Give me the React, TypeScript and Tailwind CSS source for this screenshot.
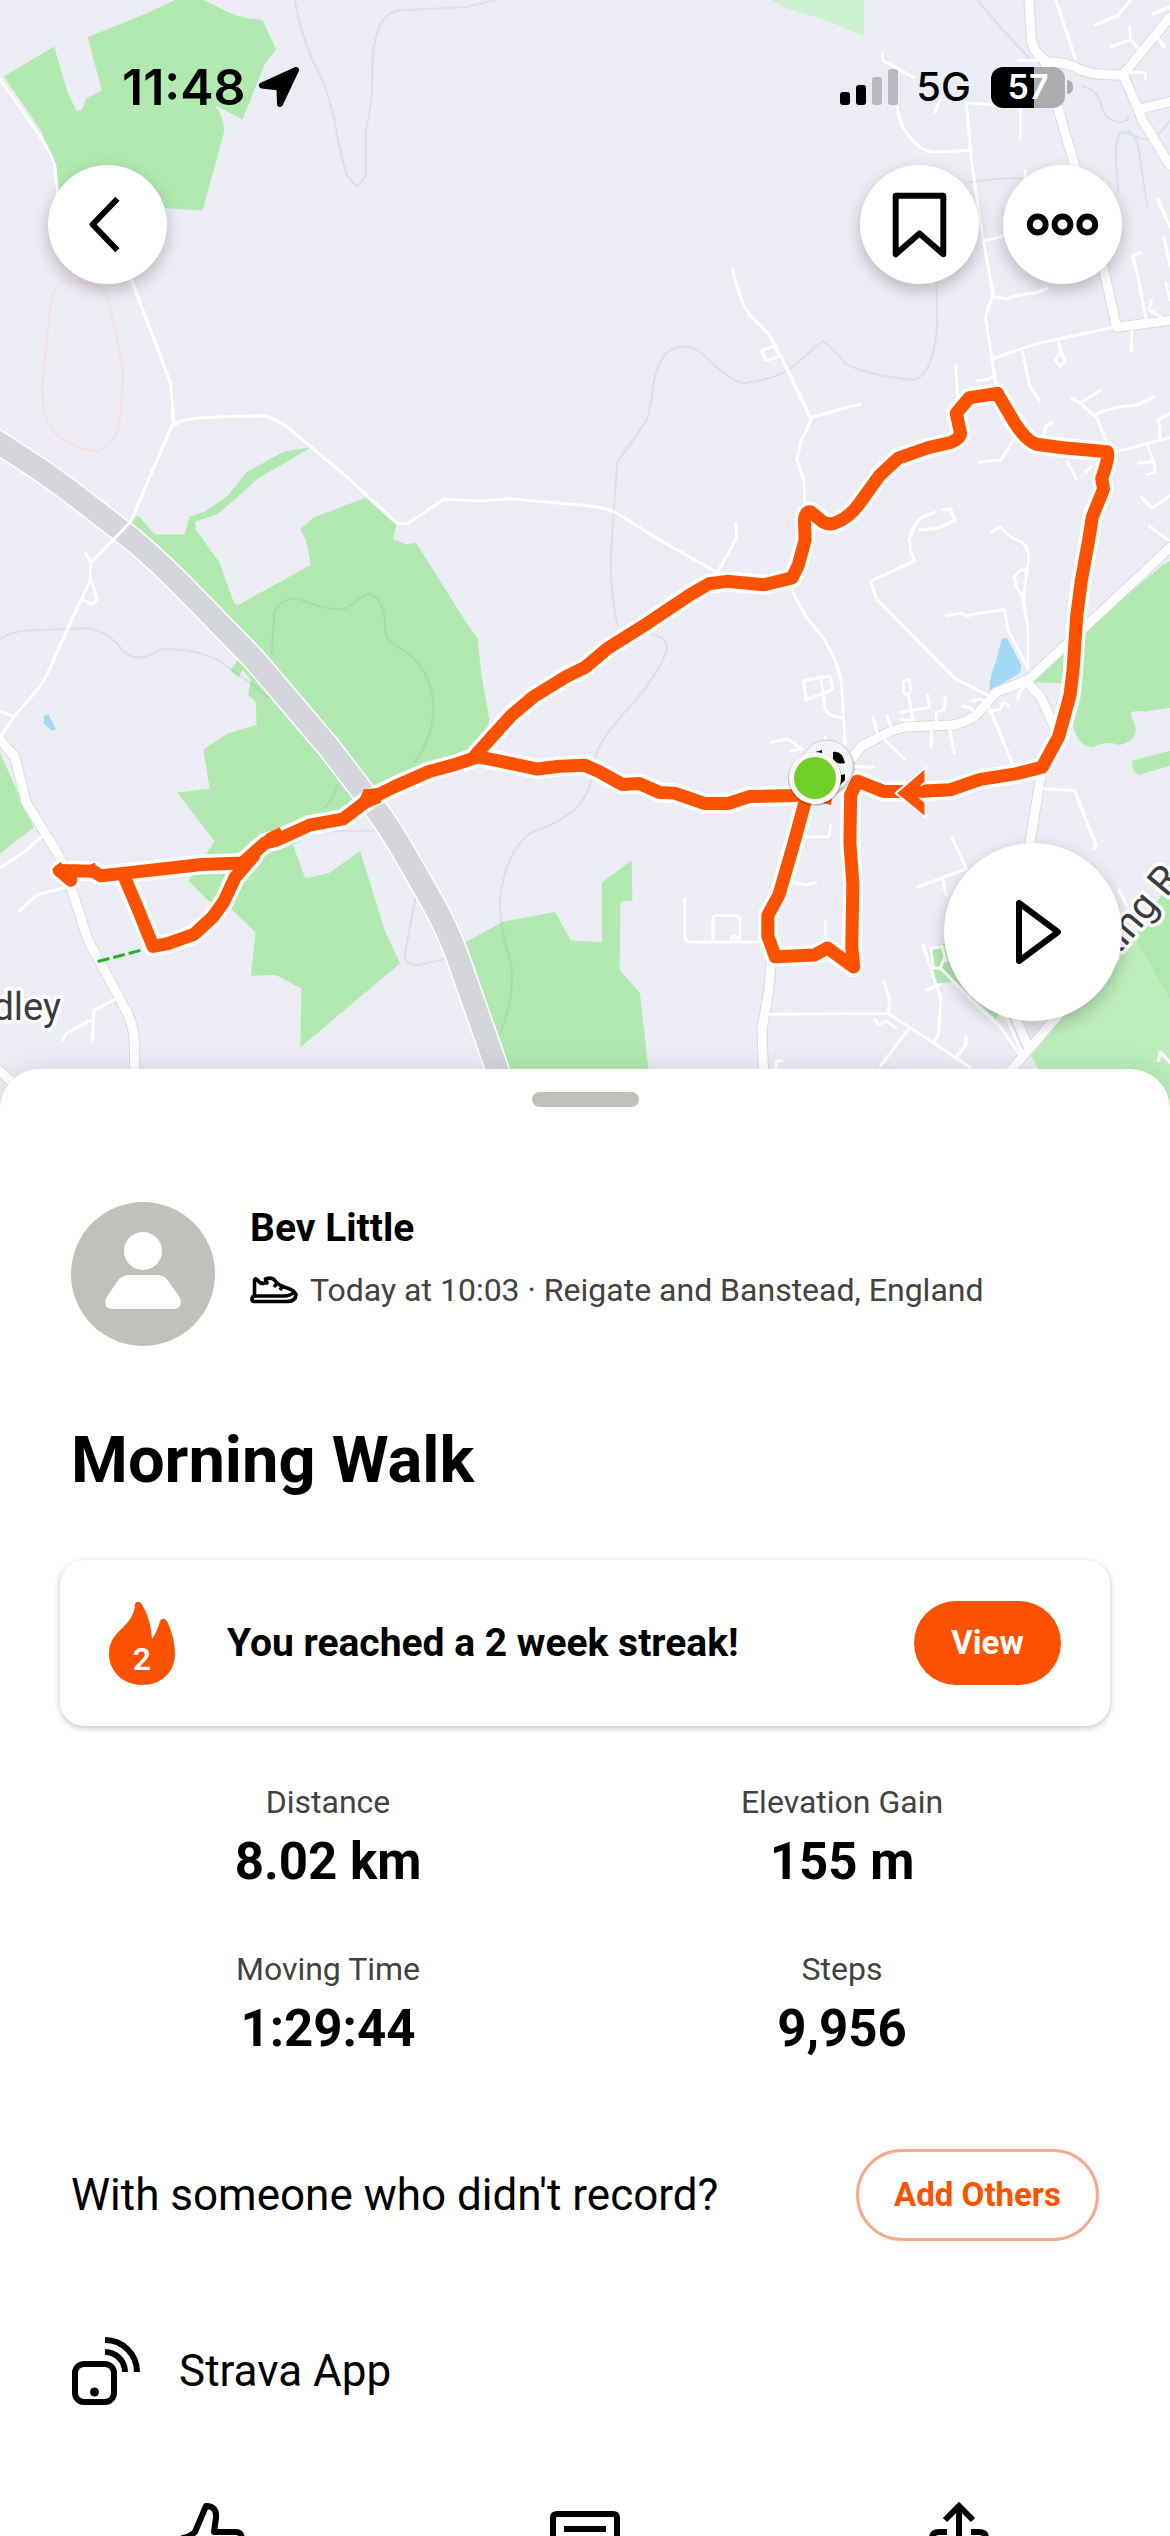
import React from "react";

const MINOR_ROADS = [
  // west side
  "M0 230L110 400Q145 460 148 490L155 570L290 700L355 820L458 1115L465 1225L350 1515L245 1633L240 1690L210 1758L150 1900Q120 1980 100 2003L40 2078L0 2140",
  "M230 1608L245 1633M243 1680L260 1740L248 1754L222 1742M0 2065L36 2080",
  "M458 1213L467 1228L490 1222M467 1235L490 1220L545 1212L705 1207Q740 1215 770 1240L930 1385L1060 1515Q1075 1526 1095 1518L1190 1450L1290 1455L1370 1448L1568 1468Q1640 1475 1668 1500L1768 1568L1923 1663",
  "M110 2430L70 2470L0 2520M180 2575L100 2598L52 2645M310 2900L252 2935L248 3020M248 2960L178 3000L170 3020",
  // lanes north of the village
  "M1963 780Q1985 880 2010 915L2062 972L2093 1035L2172 1213Q2175 1230 2148 1275L2136 1335L2155 1395L2157 1480",
  "M2172 1213L2305 1173M2093 1035L2052 1046L2042 1018L2075 1005L2088 1032",
  "M2365 155V175L2450 225M2405 310Q2410 380 2470 430Q2490 443 2510 441L2600 437M2590 300L2605 480L2636 700L2662 855Q2650 890 2641 920L2670 1120M2590 298L2700 308M2735 315V400M2520 290L2505 325",
  "M2660 860L2700 868L2725 858L2775 850L2806 838M2636 700L2690 685M2662 1042Q2740 1010 2790 995L2985 950M2740 1020L2760 1120L2786 1162M2836 990L2844 1020L2854 1050L2842 1065L2828 1045L2844 1020M2618 1106L2648 1102L2664 1090M2562 1060L2566 1150",
  "M2830 0L2882 170M3030 0L2996 45L2935 72M3090 40L3136 20M2980 135L3030 115L3050 140M3030 115L3028 80M3020 210L3070 212V230M2730 175H2780M2748 495V520M3095 100L3120 135",
  "M3056 735L3036 742L3050 805L3072 925M3104 580L3136 660M3120 690L3136 770M3086 870L3080 900L3110 920M3125 820L3136 870M3034 960L3032 1020",
  "M2872 1155L2895 1170L2950 1133M2895 1170L2940 1215L2965 1280L2968 1300M2935 1205Q2960 1190 3000 1182L3050 1175L3093 1153M2990 1312L3136 1270M3075 1290L3095 1350V1370L3075 1378M3110 1270L3105 1220L3136 1200M3052 1345L3090 1340",
  "M2626 1342L2683 1336L2700 1305L2720 1270M2795 1270L2805 1235L2820 1225M2860 1340L2885 1390M2910 1370L2925 1355",
  "M3060 1445L3088 1475L3136 1440M3080 1527L3130 1568M2658 1545L2680 1530L2710 1560L2740 1575Q2757 1590 2757 1620L2742 1740L2755 1820V1940",
  "M2436 1568L2450 1530L2465 1505L2505 1488M2525 1480L2548 1478L2560 1512L2510 1535L2465 1538M1923 1663L1975 1560L1972 1520",
  "M2438 1568L2440 1600L2452 1628L2333 1688L2350 1740L2560 1970L2650 2020M2752 1655L2735 1655L2718 1675L2725 1705L2738 1728",
  "M2538 1788L2575 1780L2590 1788L2640 1778L2692 1770L2702 1830L2755 1940",
  "M2120 1710L2160 1790L2210 1858Q2250 1930 2256 1990L2265 2160",
  "M2154 1976L2225 1962L2232 2002L2160 2032ZM2200 1968L2212 2060Q2220 2080 2260 2085M2068 2155L2110 2145L2150 2175L2118 2180M2212 2140L2216 2160",
  "M2422 1980L2436 1973L2442 2005L2432 2020L2422 2010ZM2436 2020L2446 2090M2416 2068L2492 2054L2486 2018M2416 2090H2450M2534 2025L2530 2060L2510 2070V2110M2340 2084L2352 2130M2378 2078L2386 2110M2496 2120V2170M2545 2115L2558 2188M2372 2150L2426 2205",
  "M2650 2050L2714 2218M2608 2035L2630 2030L2650 2050M2580 2050L2602 2055L2612 2068M2650 2065L2680 2060L2690 2040L2706 2050M2728 2030L2732 2010L2748 1990",
  "M2290 2226L2342 2228M2798 2290L2880 2295L2938 2455L2932 2465M2460 2575L2590 2523L2552 2432M2526 2550L2536 2600M2130 2563L2165 2570L2186 2562M2158 2430H2222L2226 2398",
  "M1835 2610V2720Q1838 2734 1850 2735H2035M1911 2732V2665Q1915 2655 1925 2658H1970Q1985 2660 1984 2675L1983 2732M1960 2725A8 8 0 1 1 1972 2732M2212 2675V2730",
  "M2062 2945L2380 2942L2440 2985L2510 3034L2600 3100M2370 2850L2385 2905L2380 2942M2434 2990L2360 3095M2345 2960L2355 2976L2375 2965L2402 2985M2080 3100V3082L2095 3080M2590 3010L2588 3035L2566 3065",
  "M2474 2745L2522 2900L2515 3005L2505 3022M2482 2875L2520 2860M2494 2755L2525 2748L2535 2790M2494 2755L2502 2810L2520 2812M2530 2785L2520 2810L2600 2900L2680 2980L2735 3065M2630 2900L2700 2960L2740 3060M3000 2585L3025 2640",
  "M3105 3080L3110 3055L3136 3085",
];

const MAJOR_ROADS = [
  "M0 2148L40 2198L70 2330L160 2488L200 2608L235 2728L340 2938Q358 2980 360 3020L362 3200M0 3110L40 3150",
  "M2758 0L2764 110Q2770 160 2810 180Q2860 180 2900 205Q2940 220 3010 217L3136 50M3010 217L3050 315L3060 345L3136 480M3050 318L3136 295",
  "M2800 180L2875 460L2960 790L2993 950L3136 930",
  "M3136 1590L2755 1975L2670 2010L2615 2078Q2570 2108 2540 2106L2430 2110Q2390 2118 2340 2150L2310 2165L2285 2200",
  "M2748 1975L2790 2025L2830 2120M2792 2240L2775 2350L2760 2450",
  "M2068 2790L2060 2880L2042 2990L2050 3200M2700 3120L2850 2930M2720 2950L2752 3030",
];

const CONTOURS = [
  "M790 0Q810 120 850 200Q890 290 905 400Q920 480 930 510L957 543L980 510V380Q1000 300 998 200Q1000 30 1080 30L1250 20L1330 0",
  "M1640 1568Q1650 1400 1655 1340Q1730 1230 1735 1215C1755 1150 1740 1080 1790 1020Q1840 990 1880 1025Q1960 1110 1995 1112Q2090 1100 2130 1060L2205 990Q2240 1020 2265 1055Q2320 1090 2450 1103Q2500 1090 2512 950L2510 800",
  "M1640 1568Q1630 1700 1655 1815M1745 1842Q1790 1850 1788 1885Q1770 1950 1690 2050Q1610 2140 1595 2200Q1590 2300 1540 2350Q1500 2390 1420 2420Q1350 2480 1340 2620Q1340 2700 1370 2800Q1380 2900 1340 3000",
  "M0 1855Q40 1828 90 1830L230 1824Q290 1830 330 1890Q370 1930 430 1885Q520 1880 590 1920L680 1990Q730 2040 730 2020",
  "M728 1900L735 1780Q750 1735 800 1738Q890 1780 930 1765L985 1723Q1035 1735 1032 1830Q1035 1860 1060 1875Q1160 1930 1162 2060Q1160 2140 1110 2215M870 2345Q900 2310 902 2280M830 2415L1000 2412M1115 2600L1085 2770Q1080 2800 1120 2803L1190 2785",
  "M2620 0Q2680 80 2760 170M2590 530Q2680 515 2740 518M2900 250Q2940 260 2950 300Q2960 350 3000 355Q3020 355 3025 340M2998 560Q2980 380 3010 385Q3040 385 3050 420L3075 600M3025 380Q3080 440 3136 350",
];

const GREENS = [
  "M10 222L145 135L180 265L205 322L220 318L232 285L273 262L235 108L395 38L470 0H545L620 40L660 53L703 57L740 143L710 185L650 347L575 305Q603 345 600 385L543 612L445 605L150 560L148 480L110 380Z",
  "M835 1298L760 1312L660 1372L610 1440L550 1485L508 1500L495 1552H415L370 1497L350 1515L460 1670L640 1913L618 1946L640 1968L650 1945L672 1973L665 2018L685 2038L688 2105L610 2130L545 2176L562 2290L475 2301L575 2443L505 2558L560 2618L620 2640L685 2708L672 2833L740 2831L808 2871L805 3041L1072 2798L1030 2698L965 2471L882 2535L818 2550L785 2453L1000 2335L1290 2180L1312 2090L1290 1958L1280 1853L1250 1808L1115 1576L1090 1580L1052 1565L1062 1525L980 1445L840 1503L805 1537L820 1568L833 1640L640 1756L628 1753L588 1633L545 1568L525 1540L523 1515L585 1492L640 1440L690 1390L770 1340Z",
  "M0 2185L90 2403L0 2478Z",
  "M1240 2740L1350 2676L1488 2648L1530 2731L1613 2736V2563L1693 2498L1695 2615L1663 2618L1661 2816L1715 2883L1738 3103V3200H1390Z",
  "M3136 1630L3118 1640L2908 1828L2898 2018L2876 2108Q2895 2175 2930 2168Q2970 2150 3000 2163Q3050 2150 3043 2110L3030 2070Q3040 2062 3070 2066L3136 2055Z",
  "M3036 2208L3136 2180V2223L3053 2250Q3030 2240 3036 2208Z",
  "M2768 1980L2851 1893L2848 1984Z",
  "M2488 2758L2540 2735L2560 2830L2680 2930L2670 2960L2560 2850L2510 2855Z",
];

const ROUTE = [
  "M2185 2303L2128 2310L2008 2313L1953 2333H1888L1808 2303L1768 2301L1713 2275L1668 2278L1610 2243L1568 2222L1500 2225L1440 2233L1330 2208L1280 2198L1210 2223L1150 2240L1060 2283L990 2320L920 2378L830 2396L740 2440L710 2448L650 2506L540 2510L330 2536L270 2543L250 2530L160 2528L190 2556",
  "M330 2538L370 2640L410 2748L450 2740L520 2713L570 2663L600 2618L630 2548L680 2485",
  "M1275 2192L1370 2078L1430 2023L1520 1963L1568 1938L1628 1883L1738 1808L1848 1728L1900 1695L1948 1688L2048 1698L2123 1678L2140 1640L2158 1568L2156 1510Q2160 1480 2175 1488L2205 1515Q2225 1527 2245 1515Q2280 1500 2308 1455L2358 1380L2408 1330L2488 1300L2548 1285Q2580 1270 2573 1250L2563 1200L2598 1155L2673 1142L2718 1225Q2750 1280 2778 1290L2848 1300L2968 1312Q2975 1320 2953 1390L2958 1420L2928 1500L2918 1568L2898 1688L2886 1788L2876 1948L2868 2018L2838 2138L2793 2228L2718 2248L2628 2263L2548 2293L2448 2298H2368L2298 2268L2280 2308L2278 2448L2286 2568L2283 2748L2288 2808L2218 2753L2183 2773L2078 2778L2058 2718V2658L2088 2598L2128 2448L2158 2328",
];

const ARROW_TAIL = ["M2440 2300L2480 2298L2548 2293"];

const MOTORWAY = [
  "M-20 1274L105 1362L180 1420L357 1568Q440 1645 518 1733L680 1913L786 2048L880 2168L986 2318Q1040 2395 1079 2468L1163 2628Q1195 2690 1223 2768L1332 3103L1362 3200",
];

function Strokes({ paths, color, width }: { paths: string[]; color: string; width: number }) {
  return (
    <g fill="none" stroke={color} strokeWidth={width} strokeLinecap="round" strokeLinejoin="round">
      {paths.map((d) => (
        <path key={d} d={d} vectorEffect="non-scaling-stroke" />
      ))}
    </g>
  );
}

function RouteMap() {
  return (
    <svg
      viewBox="0 0 1170 1110"
      preserveAspectRatio="xMidYMin slice"
      className="col-start-1 row-start-1 h-[1110px] w-full bg-[#ebecf4]"
      role="img"
      aria-label="Map of the walk route"
    >
      {/* Survey grid units: 3136 across and 3136 down for 1170 by 1080 */}
      <g transform="scale(0.37309 0.34439)">
        <path d="M2068 0L2098 20L2218 60L2315 105V0Z" fill="#cdf0cf" />
        {GREENS.map((d) => (
          <path key={d} d={d} fill="#b1e9b0" />
        ))}
        <path d="M2763 3063L2860 2940L3010 2770L3136 2578V3230H2840Z" fill="#bdedbb" />
        <path d="M3040 2720L3136 2900V2560Z" fill="#b1e9b0" />
        <path d="M2685 1853H2700L2738 1933L2733 1955L2653 2006Q2650 1970 2670 1920Z" fill="#a3d9f2" />
        <path d="M118 2078L130 2075L150 2118L138 2122L118 2100Z" fill="#a3d9f2" />
        <path
          d="M180 818C140 820 135 870 132 920L113 1120Q112 1220 150 1260Q210 1310 265 1308Q320 1290 325 1180L330 1080Q300 900 285 860Q270 820 220 822Z"
          fill="none"
          stroke="#f7dfdf"
          strokeWidth="2"
          vectorEffect="non-scaling-stroke"
        />
        <g opacity="0.09">
          <Strokes paths={CONTOURS} color="#5b6478" width={2} />
        </g>
        <Strokes paths={MOTORWAY} color="#ffffff" width={25} />
        <Strokes paths={MOTORWAY} color="#d5d6dc" width={22} />
        <Strokes paths={MAJOR_ROADS} color="#dadbe2" width={11} />
        <Strokes paths={MINOR_ROADS} color="#ffffff" width={3} />
        <Strokes paths={MAJOR_ROADS} color="#ffffff" width={9} />
        <path
          d="M262 2792L382 2758"
          stroke="#1fb51f"
          strokeWidth="3"
          strokeDasharray="12 4"
          vectorEffect="non-scaling-stroke"
        />
        <Strokes paths={ROUTE} color="#ffffff" width={20} />
        <Strokes paths={ROUTE} color="#fc5200" width={13} />
        <path
          d="M960 2330L975 2292L1015 2288L1022 2330L990 2345L965 2348ZM140 2524L162 2503L180 2525L205 2560L187 2572L145 2540ZM700 2440L715 2420L750 2402L765 2435L725 2462ZM230 2515L255 2505L262 2545L240 2545Z"
          fill="#fc5200"
        />
        <path
          d="M2405 2303L2478 2235V2270L2444 2300L2478 2332V2368Z"
          fill="#fc5200"
          stroke="#ffffff"
          strokeWidth="4"
          paintOrder="stroke"
          vectorEffect="non-scaling-stroke"
        />
        <Strokes paths={ARROW_TAIL} color="#fc5200" width={12} />
      </g>
      <g>
        <circle cx="828" cy="768" r="27" fill="#000000" opacity="0.15" />
        <circle cx="827" cy="766" r="26" fill="#f3f3f3" stroke="#cfcfcf" />
        <path d="M833 752Q842 750 845 763Q837 765 833 759ZM838 776L845 774V780L839 786ZM812 753L822 750V754Z" fill="#000000" />
        <path d="M822 803L832 799L831 805Z" fill="#fc5200" />
        <circle cx="815" cy="779" r="27" fill="#000000" opacity="0.2" />
        <circle cx="815" cy="778" r="26" fill="#fafafa" />
        <circle cx="815" cy="778" r="21" fill="#70d026" />
      </g>
      <g
        fontFamily="Roboto, sans-serif"
        fill="#3c3c40"
        stroke="#ffffff"
        strokeWidth="7"
        strokeLinejoin="round"
        paintOrder="stroke"
      >
        <text x="61" y="1020" fontSize="38" textAnchor="end">
          dley
        </text>
        <text transform="translate(1112 963) rotate(-50)" fontSize="40">
          king R
        </text>
      </g>
    </svg>
  );
}

function StatusBar() {
  return (
    <div className="flex h-11 items-center justify-between pr-[97px] pl-[122px] font-['Inter',sans-serif] text-black">
      <div className="flex items-center gap-3">
        <span className="text-[50px] leading-none font-semibold">11:48</span>
        <svg viewBox="0 0 42 42" className="size-[42px]" aria-hidden="true">
          <path
            d="M38 4L4 19.500L21.500 21.500L22 38Z"
            fill="#000"
            stroke="#000"
            strokeWidth="6"
            strokeLinejoin="round"
          />
        </svg>
      </div>
      <div className="flex items-center">
        <div className="flex items-end gap-1.5" aria-label="Signal strength">
          <span className="h-[13px] w-2.5 rounded-[3px] bg-black" />
          <span className="h-5 w-2.5 rounded-[3px] bg-black" />
          <span className="h-7 w-2.5 rounded-[3px] bg-[#b7b8be]" />
          <span className="h-9 w-2.5 rounded-[3px] bg-[#b7b8be]" />
        </div>
        <span className="ml-[18px] text-[40px] leading-none font-medium">5G</span>
        <div className="ml-5 flex items-center gap-0.5">
          <span className="flex h-[41px] w-[74px] items-center justify-center rounded-xl bg-[linear-gradient(to_right,#000_58%,#adadb0_58%)] text-[34px] leading-none font-semibold text-white">
            57
          </span>
          <span className="h-3.5 w-1.5 rounded-r-full bg-[#adadb0]" />
        </div>
      </div>
    </div>
  );
}

const ROUND_BUTTON =
  "flex items-center justify-center rounded-full bg-white shadow-[0_6px_16px_rgba(0,0,0,0.22)]";

function MapControls() {
  return (
    <div className="z-10 col-start-1 row-start-1 flex flex-col pt-[65px] pb-[89px]">
      <StatusBar />
      <div className="mt-14 flex justify-between px-12">
        <button type="button" aria-label="Back" className={`${ROUND_BUTTON} size-[119px]`}>
          <svg viewBox="0 0 120 120" className="size-full" fill="none" stroke="#000" strokeWidth="6" strokeLinejoin="round">
            <path d="M70 34L45 60L70 86" />
          </svg>
        </button>
        <div className="flex gap-6">
          <button type="button" aria-label="Save" className={`${ROUND_BUTTON} size-[119px]`}>
            <svg viewBox="0 0 120 120" className="size-full" fill="none" stroke="#000" strokeWidth="6" strokeLinejoin="round">
              <path d="M36 31H84V90L60 69L36 90Z" />
            </svg>
          </button>
          <button type="button" aria-label="More" className={`${ROUND_BUTTON} size-[119px]`}>
            <svg viewBox="0 0 120 120" className="size-full" fill="none" stroke="#000" strokeWidth="6">
              <circle cx="35" cy="60" r="8" />
              <circle cx="60" cy="60" r="8" />
              <circle cx="85" cy="60" r="8" />
            </svg>
          </button>
        </div>
      </div>
      <button type="button" aria-label="Play flyover" className={`${ROUND_BUTTON} mt-auto mr-12 size-[178px] self-end`}>
        <svg viewBox="0 0 178 178" className="size-full" fill="none" stroke="#000" strokeWidth="6" strokeLinejoin="round">
          <path d="M75 60V118L114 89Z" />
        </svg>
      </button>
    </div>
  );
}

function ShoeIcon() {
  return (
    <svg viewBox="0 0 48 28" className="h-7 w-12" fill="none" stroke="#000" strokeWidth="3.600" strokeLinejoin="round" aria-hidden="true">
      <path d="M4.500 19V4.500Q5 1.500 7.500 4Q10.500 8.500 14.500 7L17 7L15.500 3Q21 1 24 3.500Q28 9 34 11Q45 14 46 18.500Q45.500 25.500 37 25.500H4Q2 25.500 2 23Q2 20.500 4.500 20H33Q41 20 44 16" />
      <path d="M28 6L24 11M33.500 9L30 14" />
    </svg>
  );
}

function FlameBadge({ count }: { count: number }) {
  return (
    <span className="grid shrink-0 place-items-center">
      <svg viewBox="0 0 66 84" className="col-start-1 row-start-1 h-[84px] w-[66px]" aria-hidden="true">
        <path
          d="M26 3Q28 -1 32 2C39 13 42 24 43 38Q49 29 51 20Q54 15 58 20Q66 37 66 53C66 71 52 84 33 84C14 84 0 70 0 53C0 28 25 27 26 3Z"
          fill="#fc5200"
        />
      </svg>
      <span className="col-start-1 row-start-1 pt-8 text-[32px] leading-none font-semibold text-white">{count}</span>
    </span>
  );
}

const STATS = [
  { label: "Distance", value: "8.02 km" },
  { label: "Elevation Gain", value: "155 m" },
  { label: "Moving Time", value: "1:29:44" },
  { label: "Steps", value: "9,956" },
];

function ActionBar() {
  const icon = "h-[72px] w-[72px]";
  return (
    <nav className="mx-6 mt-[95px] grid grid-cols-3 justify-items-center" aria-label="Activity actions">
      <button type="button" aria-label="Give kudos">
        <svg viewBox="0 0 72 72" className={icon} fill="none" stroke="#000" strokeWidth="6" strokeLinejoin="round">
          <path d="M8 66V38Q16 36 20 32L31 6Q42 6 41 18L39 32H61Q67 32 67 40L60 62Q58 66 52 66Z" />
        </svg>
      </button>
      <button type="button" aria-label="Comment">
        <svg viewBox="0 0 72 72" className={icon} fill="none" stroke="#000" strokeWidth="6" strokeLinejoin="round">
          <path d="M8 14H64Q68 14 68 18V54H40L28 66V54H4V18Q4 14 8 14ZM15 29H57M15 41H44" />
        </svg>
      </button>
      <button type="button" aria-label="Share">
        <svg viewBox="0 0 72 72" className={icon} fill="none" stroke="#000" strokeWidth="6">
          <path d="M22 20L36 6L50 20M36 6V50M24 32H16Q9 32 9 38V66H63V38Q63 32 56 32H48" />
        </svg>
      </button>
    </nav>
  );
}

export default function App() {
  return (
    <div className="flex h-screen flex-col overflow-hidden bg-white font-['Roboto',sans-serif] text-black">
      <header className="grid shrink-0">
        <RouteMap />
        <MapControls />
      </header>

      <main className="relative z-20 -mt-[41px] flex shrink-0 flex-col rounded-t-[40px] bg-white pt-[23px] shadow-[0_-4px_24px_rgba(0,0,0,0.08)]">
        <div className="h-[15px] w-[107px] self-center rounded-full bg-[#c1c0ba]" />

        <section className="mx-[71px] mt-[95px] flex gap-[35px]">
          <svg viewBox="0 0 144 144" className="size-36 shrink-0" role="img" aria-label="Profile picture">
            <circle cx="72" cy="72" r="72" fill="#c1c0ba" />
            <circle cx="72" cy="49" r="19" fill="#fff" />
            <path
              d="M58 73H86Q94 73 98 80L109 96Q112 107 102 107H42Q32 107 35 96L46 80Q50 73 58 73Z"
              fill="#fff"
            />
          </svg>
          <div className="flex min-w-0 flex-col gap-[18px] pt-0.5">
            <h2 className="text-[39px] leading-[48px] font-bold">Bev Little</h2>
            <p className="flex items-center gap-3 text-[32px] leading-10 text-[#42423f]">
              <ShoeIcon />
              Today at 10:03 · Reigate and Banstead, England
            </p>
          </div>
        </section>

        <h1 className="mx-[71px] mt-[74px] text-[65px] leading-[80px] font-bold">Morning Walk</h1>

        <section className="mx-[60px] mt-[60px] flex h-[166px] items-center rounded-3xl bg-white px-[49px] shadow-[0_2px_6px_rgba(0,0,0,0.24)]">
          <FlameBadge count={2} />
          <p className="ml-[52px] flex-1 text-[39px] leading-[48px] font-bold">You reached a 2 week streak!</p>
          <button type="button" className="h-[84px] w-[147px] rounded-full bg-[#fc5200] text-[33px] font-bold text-white">
            View
          </button>
        </section>

        <dl className="mx-[71px] mt-14 grid grid-cols-2 gap-y-[57px] text-center">
          {STATS.map((stat) => (
            <div key={stat.label} className="flex flex-col gap-2.5">
              <dt className="text-[32px] leading-10 text-[#42423f]">{stat.label}</dt>
              <dd className="text-[51px] leading-[60px] font-bold">{stat.value}</dd>
            </div>
          ))}
        </dl>

        <section className="mx-[71px] mt-[90px] flex items-center justify-between">
          <p className="text-[44px] leading-[56px]">With someone who didn't record?</p>
          <button
            type="button"
            className="h-[92px] w-[243px] rounded-full border-[3px] border-[#f8a98a] text-[33px] font-bold text-[#fc5200]"
          >
            Add Others
          </button>
        </section>

        <section className="mx-[71px] mt-24 flex items-center gap-[38px]">
          <svg viewBox="0 0 70 68" className="h-[68px] w-[70px]" fill="none" stroke="#000" strokeWidth="6" aria-hidden="true">
            <rect x="4" y="27" width="39" height="38" rx="9" />
            <path d="M34 15A20 20 0 0 1 54 35M34 3A32 32 0 0 1 66 35" />
            <circle cx="23.500" cy="55" r="4.500" fill="#000" stroke="none" />
          </svg>
          <p className="text-[44px] leading-[56px]">Strava App</p>
        </section>

        <ActionBar />
      </main>
    </div>
  );
}
